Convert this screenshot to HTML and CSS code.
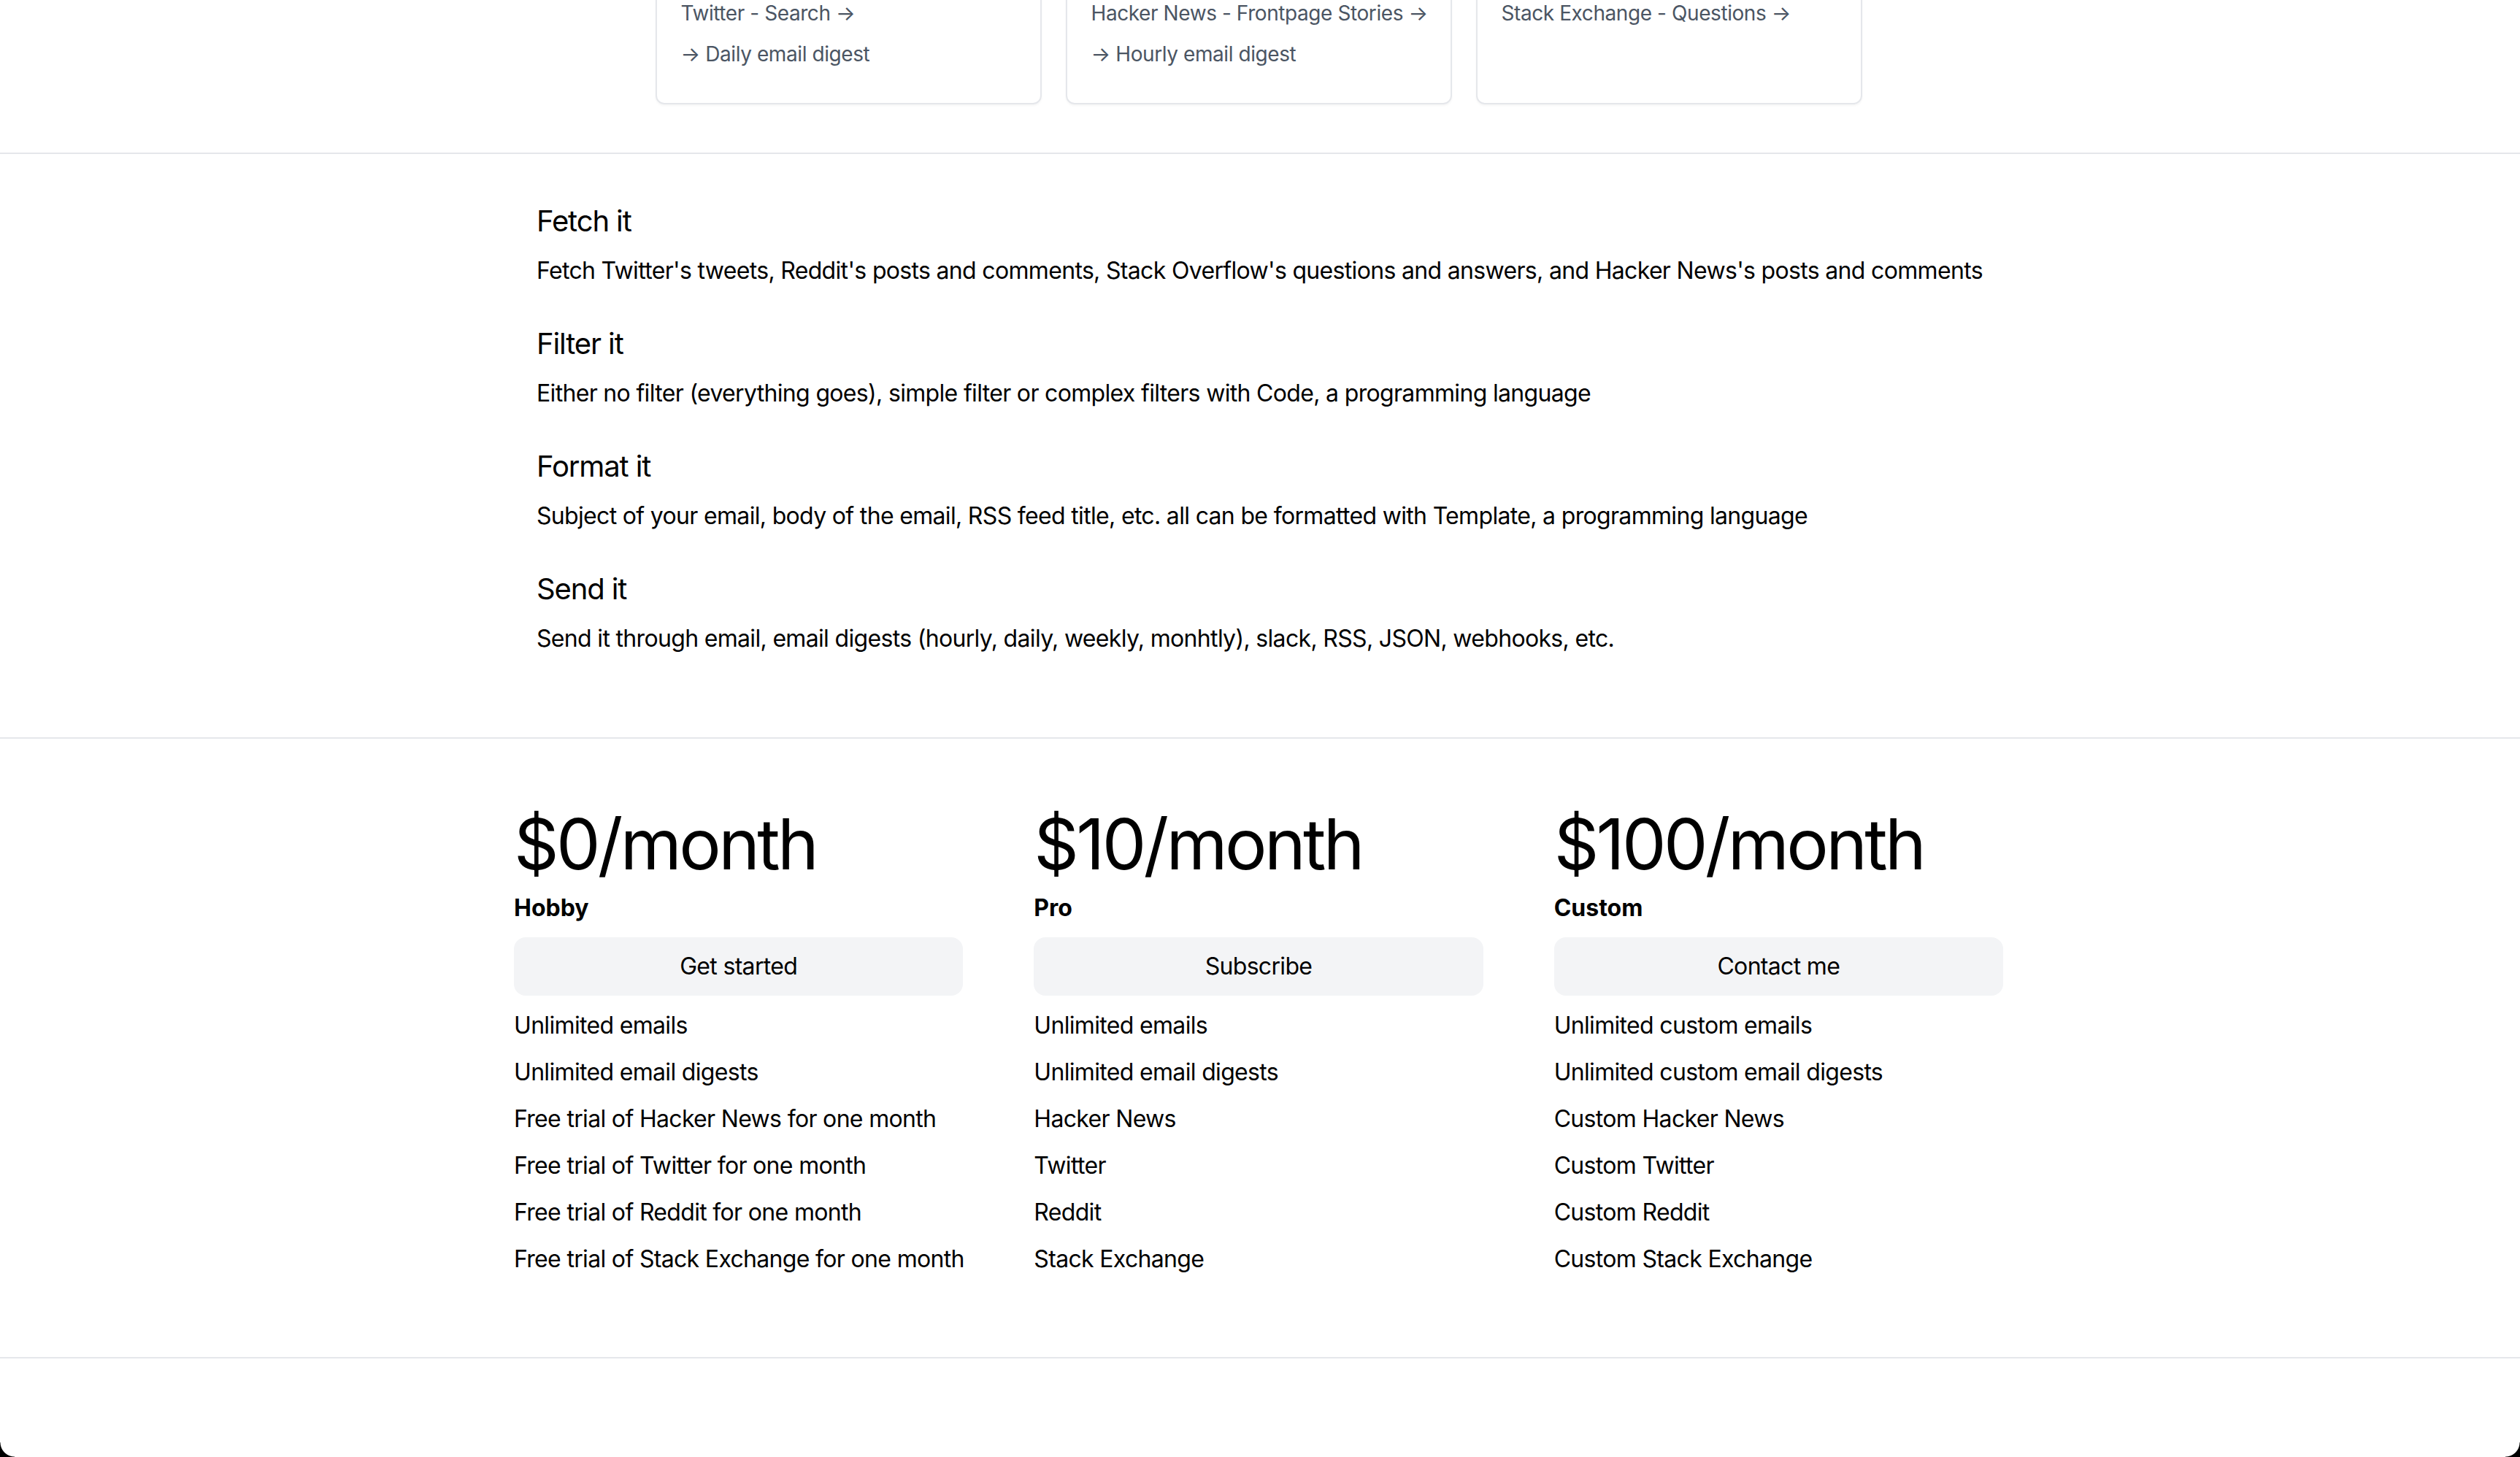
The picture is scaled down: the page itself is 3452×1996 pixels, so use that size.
FILE: index.html
```html
<!DOCTYPE html>
<html lang="en">
<head>
<meta charset="utf-8">
<title>Pricing</title>
<link rel="stylesheet" href="styles.css">
</head>
<body>
<section class="integrations">
  <div class="cards">
    <div class="card">
      <p class="card-line">Twitter - Search →</p>
      <p class="card-line">→ Daily email digest</p>
    </div>
    <div class="card">
      <p class="card-line">Hacker News - Frontpage Stories →</p>
      <p class="card-line">→ Hourly email digest</p>
    </div>
    <div class="card">
      <p class="card-line">Stack Exchange - Questions →</p>
    </div>
  </div>
</section>

<section class="features">
  <div class="container features-inner">
    <div class="feature">
      <h2 class="feature-title">Fetch it</h2>
      <p class="feature-text">Fetch Twitter's tweets, Reddit's posts and comments, Stack Overflow's questions and answers, and Hacker News's posts and comments</p>
    </div>
    <div class="feature">
      <h2 class="feature-title">Filter it</h2>
      <p class="feature-text">Either no filter (everything goes), simple filter or complex filters with Code, a programming language</p>
    </div>
    <div class="feature">
      <h2 class="feature-title">Format it</h2>
      <p class="feature-text">Subject of your email, body of the email, RSS feed title, etc. all can be formatted with Template, a programming language</p>
    </div>
    <div class="feature">
      <h2 class="feature-title">Send it</h2>
      <p class="feature-text">Send it through email, email digests (hourly, daily, weekly, monhtly), slack, RSS, JSON, webhooks, etc.</p>
    </div>
  </div>
</section>

<section class="pricing">
  <div class="container plans">
    <div class="plan">
      <h3 class="price">$0/month</h3>
      <p class="plan-name">Hobby</p>
      <button class="plan-button" type="button">Get started</button>
      <ul class="plan-list">
        <li>Unlimited emails</li>
        <li>Unlimited email digests</li>
        <li>Free trial of Hacker News for one month</li>
        <li>Free trial of Twitter for one month</li>
        <li>Free trial of Reddit for one month</li>
        <li>Free trial of Stack Exchange for one month</li>
      </ul>
    </div>
    <div class="plan">
      <h3 class="price">$10/month</h3>
      <p class="plan-name">Pro</p>
      <button class="plan-button" type="button">Subscribe</button>
      <ul class="plan-list">
        <li>Unlimited emails</li>
        <li>Unlimited email digests</li>
        <li>Hacker News</li>
        <li>Twitter</li>
        <li>Reddit</li>
        <li>Stack Exchange</li>
      </ul>
    </div>
    <div class="plan">
      <h3 class="price">$100/month</h3>
      <p class="plan-name">Custom</p>
      <button class="plan-button" type="button">Contact me</button>
      <ul class="plan-list">
        <li>Unlimited custom emails</li>
        <li>Unlimited custom email digests</li>
        <li>Custom Hacker News</li>
        <li>Custom Twitter</li>
        <li>Custom Reddit</li>
        <li>Custom Stack Exchange</li>
      </ul>
    </div>
  </div>
</section>

<footer class="footer"></footer>

<div class="corner corner-left"></div>
<div class="corner corner-right"></div>
</body>
</html>
```

FILE: styles.css
```css
* {
  box-sizing: border-box;
}

html, body {
  margin: 0;
  padding: 0;
  background: #ffffff;
}

body {
  font-family: Inter, "Noto Sans", "Liberation Sans", sans-serif;
  color: #000000;
  font-size: 32px;
  line-height: 48px;
  letter-spacing: -0.021em;
  overflow: hidden;
}

p, h2, h3, ul {
  margin: 0;
  padding: 0;
}

.container {
  width: 2046px;
  margin: 0 auto;
}

/* Integrations cards (scrolled partly out of view) */
.integrations {
  margin-top: -36px;
  padding-bottom: 66px;
  border-bottom: 2px solid #e5e7eb;
}

.cards {
  display: flex;
  justify-content: center;
  gap: 33px;
  padding-right: 4px;
}

.card {
  width: 529px;
  border: 2px solid #e5e7eb;
  border-radius: 12px;
  padding: 32px 32px 47px 33px;
  box-shadow: 0 2px 3px rgba(0, 0, 0, 0.04);
  display: flex;
  flex-direction: column;
  gap: 16px;
}

.card-line {
  font-size: 28px;
  line-height: 40px;
  color: #4b5563;
  white-space: nowrap;
  letter-spacing: -0.015em;
}

/* Features */
.features {
  padding: 64px 0 111px;
  border-bottom: 2px solid #e5e7eb;
}

.features-inner {
  padding: 0 32px;
  display: flex;
  flex-direction: column;
  gap: 48px;
}

.feature {
  display: flex;
  flex-direction: column;
  gap: 16px;
}

.feature-title {
  font-size: 40px;
  line-height: 56px;
  font-weight: 400;
  letter-spacing: -0.028em;
}

.feature-text {
  font-size: 32px;
  line-height: 48px;
  white-space: nowrap;
}

/* Pricing */
.pricing {
  padding: 96px 0 110px;
  border-bottom: 2px solid #e5e7eb;
}

.plans {
  width: 2044px;
  padding-right: 4px;
  display: grid;
  grid-template-columns: repeat(3, minmax(0, 1fr));
  column-gap: 97px;
}

.plan {
  display: flex;
  flex-direction: column;
  min-width: 0;
}

.price {
  font-size: 96px;
  line-height: 96px;
  font-weight: 400;
  letter-spacing: -0.038em;
  white-space: nowrap;
}

.plan-name {
  margin-top: 16px;
  font-size: 32px;
  line-height: 48px;
  font-weight: 700;
  letter-spacing: 0;
}

.plan-button {
  margin-top: 16px;
  height: 80px;
  border: none;
  border-radius: 16px;
  background: #f3f4f6;
  font-family: inherit;
  font-size: 32px;
  line-height: 48px;
  letter-spacing: -0.021em;
  color: #000000;
  cursor: pointer;
}

.plan-list {
  margin-top: 17px;
  list-style: none;
  display: flex;
  flex-direction: column;
  gap: 16px;
}

.plan-list li {
  font-size: 32px;
  line-height: 48px;
  white-space: nowrap;
}

.footer {
  height: 200px;
}

/* Window corners */
.corner {
  position: fixed;
  bottom: 0;
  width: 20px;
  height: 20px;
  pointer-events: none;
}

.corner-left {
  left: 0;
  background: radial-gradient(circle at 100% 0, transparent 19px, #000 20px);
}

.corner-right {
  right: 0;
  background: radial-gradient(circle at 0 0, transparent 19px, #000 20px);
}
```
